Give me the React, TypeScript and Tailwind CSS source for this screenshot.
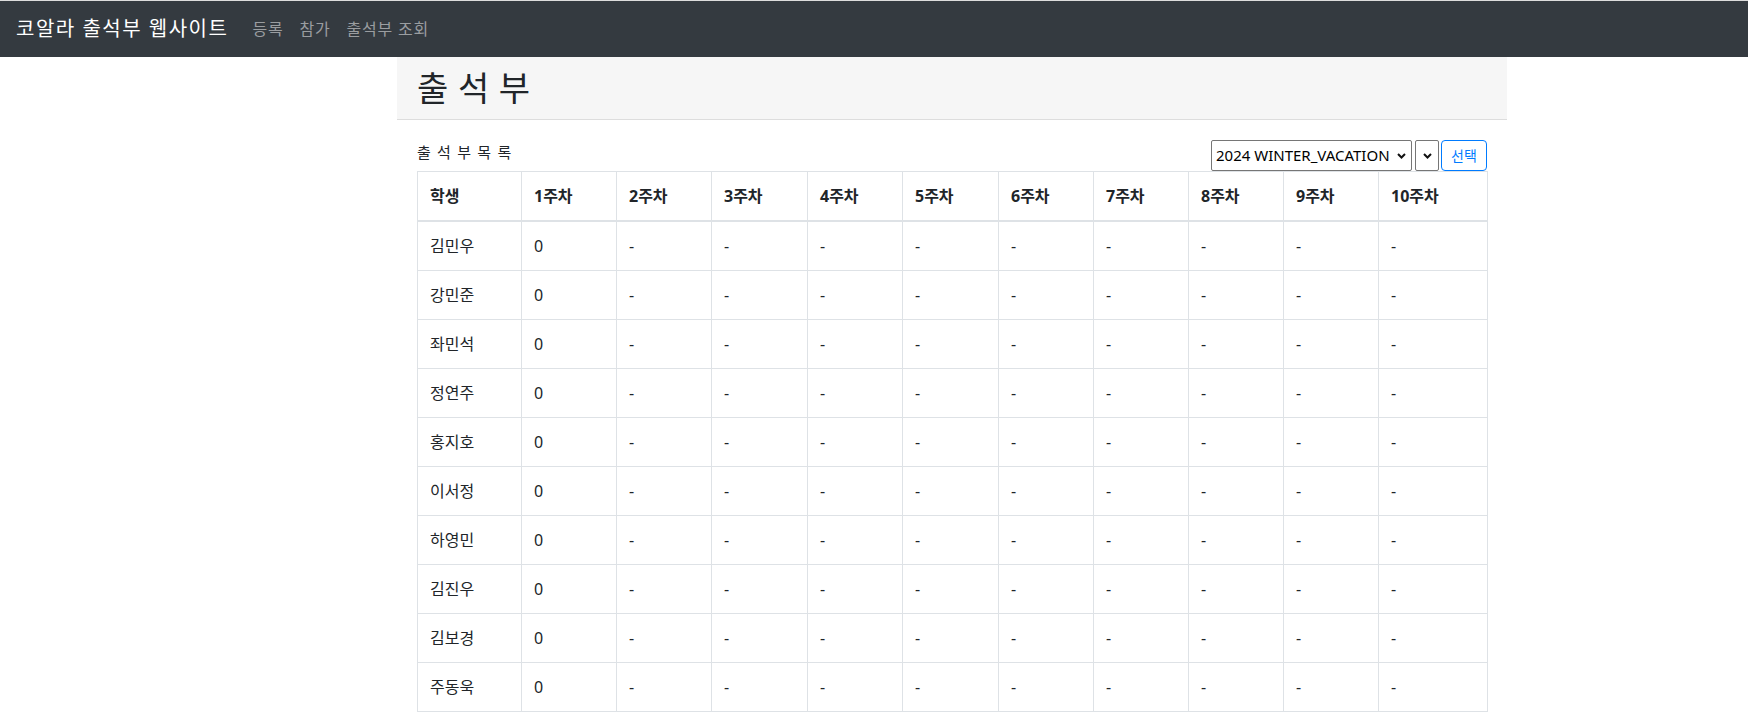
const students = ["김민우", "강민준", "좌민석", "정연주", "홍지호", "이서정", "하영민", "김진우", "김보경", "주동욱"];
const weeks = ["1주차", "2주차", "3주차", "4주차", "5주차", "6주차", "7주차", "8주차", "9주차", "10주차"];
const colW = ["w-[95px]", "w-[95px]", "w-[96px]", "w-[95px]", "w-[96px]", "w-[95px]", "w-[95px]", "w-[95px]", "w-[95px]", "w-[109px]"];

function Chevron() {
  return (
    <svg width="9" height="6" viewBox="0 0 9 6" className="shrink-0">
      <path d="M1 1l3.5 3.5L8 1" fill="none" stroke="#111" strokeWidth="2" />
    </svg>
  );
}

export default function App() {
  return (
    <div className="min-h-screen bg-white font-['Noto_Sans','Noto_Sans_CJK_KR',sans-serif] text-[#212529] border-t border-[#dcdcdc]">
      {/* navbar */}
      <nav className="h-[56px] bg-[#343a40] flex items-center px-4">
        <span className="text-white text-[20px] leading-[30px] mr-4 tracking-[1.5px]">코알라 출석부 웹사이트</span>
        <a className="text-[#9a9da0] text-[16px] px-2 tracking-[0.8px]">등록</a>
        <a className="text-[#9a9da0] text-[16px] px-2 tracking-[0.8px]">참가</a>
        <a className="text-[#9a9da0] text-[16px] px-2 tracking-[0.8px]">출석부 조회</a>
      </nav>

      <div className="ml-[397px] w-[1110px]">
        <div className="bg-[#f6f6f6] border-b border-[#dddddd] h-[63px] flex items-center pl-[20px]">
          <h1 className="text-[34px] leading-[40px] tracking-[0.4px]">출 석 부</h1>
        </div>

        <div className="px-[20px]">
          <div className="flex justify-between items-start pt-[20px]">
            <span className="text-[15px] leading-[24px] tracking-[1.2px]">출 석 부 목 록</span>
            <div className="flex items-stretch">
              <div className="w-[201px] h-[31px] border border-[#767676] rounded-[2px] flex items-center justify-between pl-[4px] pr-[5px] text-[15px] text-black">
                <span>2024 WINTER_VACATION</span>
                <Chevron />
              </div>
              <div className="ml-[3px] w-[24px] h-[31px] border border-[#767676] rounded-[2px] flex items-center justify-center">
                <Chevron />
              </div>
              <button className="ml-[2px] h-[31px] w-[46px] border border-[#007bff] rounded-[4px] text-[#007bff] text-[14px] leading-[21px]">선택</button>
            </div>
          </div>

          <table className="w-[1070px] table-fixed border-collapse text-[16px] leading-[24px]">
            <thead>
              <tr>
                <th className="w-[104px] border border-[#dee2e6] border-b-2 px-3 py-3 text-left font-bold">학생</th>
                {weeks.map((w, i) => (
                  <th key={w} className={`${colW[i]} border border-[#dee2e6] border-b-2 px-3 py-3 text-left font-bold`}>{w}</th>
                ))}
              </tr>
            </thead>
            <tbody>
              {students.map((s) => (
                <tr key={s}>
                  <td className="border border-[#dee2e6] px-3 py-3">{s}</td>
                  {weeks.map((w, i) => (
                    <td key={w} className="border border-[#dee2e6] px-3 py-3">{i === 0 ? "0" : "-"}</td>
                  ))}
                </tr>
              ))}
            </tbody>
          </table>
        </div>
      </div>
    </div>
  );
}
